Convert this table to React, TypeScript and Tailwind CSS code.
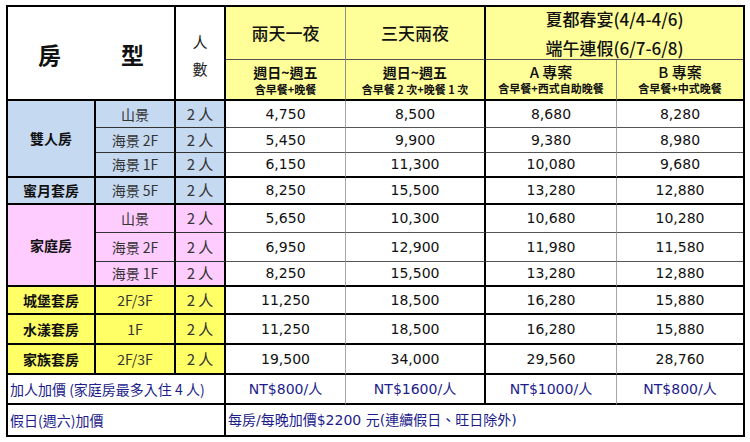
import type { ReactNode } from 'react'

const cjk = "font-['Noto_Sans_CJK_TC','Noto_Sans',sans-serif]"
const num = "font-['DejaVu_Sans','Noto_Sans_CJK_TC',sans-serif]"

type Row = {
  group?: { name: string; span: number; bg: string }
  sub: string
  bg: string
  last: boolean
  prices: string[]
}

const BLUE = 'bg-[#c5d9f1]'
const PINK = 'bg-[#ffccff]'
const YELLOW = 'bg-[#ffff66]'

const rows: Row[] = [
  { group: { name: '雙人房', span: 3, bg: BLUE }, sub: '山景', bg: BLUE, last: false, prices: ['4,750', '8,500', '8,680', '8,280'] },
  { sub: '海景 2F', bg: BLUE, last: false, prices: ['5,450', '9,900', '9,380', '8,980'] },
  { sub: '海景 1F', bg: BLUE, last: true, prices: ['6,150', '11,300', '10,080', '9,680'] },
  { group: { name: '蜜月套房', span: 1, bg: BLUE }, sub: '海景 5F', bg: BLUE, last: true, prices: ['8,250', '15,500', '13,280', '12,880'] },
  { group: { name: '家庭房', span: 3, bg: PINK }, sub: '山景', bg: PINK, last: false, prices: ['5,650', '10,300', '10,680', '10,280'] },
  { sub: '海景 2F', bg: PINK, last: false, prices: ['6,950', '12,900', '11,980', '11,580'] },
  { sub: '海景 1F', bg: PINK, last: true, prices: ['8,250', '15,500', '13,280', '12,880'] },
  { group: { name: '城堡套房', span: 1, bg: YELLOW }, sub: '2F/3F', bg: YELLOW, last: true, prices: ['11,250', '18,500', '16,280', '15,880'] },
  { group: { name: '水漾套房', span: 1, bg: YELLOW }, sub: '1F', bg: YELLOW, last: true, prices: ['11,250', '18,500', '16,280', '15,880'] },
  { group: { name: '家族套房', span: 1, bg: YELLOW }, sub: '2F/3F', bg: YELLOW, last: true, prices: ['19,500', '34,000', '29,560', '28,760'] },
]

// right border per price column: thin gray / thick black / thin gray / none
const priceRight = [
  'border-r border-r-[#a6a6a6]',
  'border-r-2 border-r-black',
  'border-r border-r-[#a6a6a6]',
  '',
]

function Cell({ className, children }: { className: string; children?: ReactNode }) {
  return <div className={`flex items-center justify-center ${className}`}>{children}</div>
}

export default function App() {
  return (
    <div className="min-h-screen bg-white pl-[6px] pt-[5px]">
      <div
        className={`grid w-[739px] border-2 border-black text-[#111] ${cjk} grid-cols-[88px_80px_50px_120px_140px_131px_126px] grid-rows-[53px_41px_27px_25px_25px_27px_28px_29px_25px_28px_30px_30px_30px_30px]`}
      >
        {/* Header */}
        <div className="col-span-2 row-span-2 flex items-center justify-between border-r-2 border-b-2 border-black px-[30px] pt-[2px] text-[23px] font-bold">
          <span>房</span>
          <span>型</span>
        </div>
        <div className="row-span-2 flex flex-col items-center justify-center gap-[5px] border-r-2 border-b-2 border-black pt-[4px] text-[15px] leading-[22px] text-[#222]">
          <span>人</span>
          <span>數</span>
        </div>
        <Cell className="border-r border-r-[#8c8c8c] border-b border-b-[#555] bg-[#ffff99] text-[17px] font-medium">兩天一夜</Cell>
        <Cell className="border-r-2 border-r-black border-b border-b-[#555] bg-[#ffff99] text-[17px] font-medium">三天兩夜</Cell>
        <div className="col-span-2 flex flex-col items-center justify-center border-b border-b-[#555] bg-[#ffff99] text-[17px] font-medium leading-[29px]">
          <span>夏都春宴(4/4-4/6)</span>
          <span>端午連假(6/7-6/8)</span>
        </div>

        <div className="flex flex-col items-center justify-center border-r border-r-[#8c8c8c] border-b-2 border-b-black bg-[#ffff99] pt-[2px] leading-[17px]">
          <span className="text-[14px] font-semibold">週日~週五</span>
          <span className="text-[11px] font-semibold">含早餐+晚餐</span>
        </div>
        <div className="flex flex-col items-center justify-center border-r-2 border-r-black border-b-2 border-b-black bg-[#ffff99] pt-[2px] leading-[17px]">
          <span className="text-[14px] font-semibold">週日~週五</span>
          <span className="text-[11px] font-semibold">含早餐 2 次+晚餐 1 次</span>
        </div>
        <div className="flex flex-col items-center justify-center border-r border-r-[#8c8c8c] border-b-2 border-b-black bg-[#ffff99] leading-[17px]">
          <span className="text-[15px] font-medium">A 專案</span>
          <span className="text-[11px] font-semibold">含早餐+西式自助晚餐</span>
        </div>
        <div className="flex flex-col items-center justify-center border-b-2 border-b-black bg-[#ffff99] leading-[17px]">
          <span className="text-[15px] font-medium">B 專案</span>
          <span className="text-[11px] font-semibold">含早餐+中式晚餐</span>
        </div>

        {/* Room rows */}
        {rows.map((r, i) => {
          const bottom = r.last ? 'border-b-2 border-b-black' : 'border-b border-b-[#333]'
          const priceBottom = r.last ? 'border-b-2 border-b-black' : 'border-b border-b-[#555]'
          return [
            r.group && (
              <Cell
                key={`g${i}`}
                className={`${r.group.span === 3 ? 'row-span-3' : ''} border-r-2 border-b-2 border-black ${r.group.bg} text-[14px] font-bold`}
              >
                {r.group.name}
              </Cell>
            ),
            <Cell key={`s${i}`} className={`border-r-2 border-r-black ${bottom} ${r.bg} text-[14px] text-[#333]`}>
              {r.sub}
            </Cell>,
            <Cell key={`p${i}`} className={`border-r-2 border-r-black ${bottom} ${r.bg} text-[15px] text-[#333]`}>
              2 人
            </Cell>,
            ...r.prices.map((p, j) => (
              <Cell key={`v${i}-${j}`} className={`${priceRight[j]} ${priceBottom} ${num} text-[14px]`}>
                {p}
              </Cell>
            )),
          ]
        })}

        {/* Extra person */}
        <div className="col-span-3 flex items-center border-r-2 border-b-2 border-black pl-[2px] text-[14px] text-[#1c1c8c]">
          加人加價&nbsp;(家庭房最多入住 4 人)
        </div>
        {['NT$800/人', 'NT$1600/人', 'NT$1000/人', 'NT$800/人'].map((p, j) => (
          <Cell key={p + j} className={`${priceRight[j]} border-b-2 border-b-black ${num} text-[14px] text-[#1c1c8c]`}>
            {p}
          </Cell>
        ))}

        {/* Weekend */}
        <div className="col-span-3 flex items-center border-r-2 border-black pl-[2px] text-[14px] text-[#1c1c8c]">
          假日(週六)加價
        </div>
        <div className={`col-span-4 flex items-center pl-[2px] ${num} text-[14px] text-[#1c1c8c]`}>
          每房/每晚加價$2200 元(連續假日、旺日除外)
        </div>
      </div>
    </div>
  )
}
